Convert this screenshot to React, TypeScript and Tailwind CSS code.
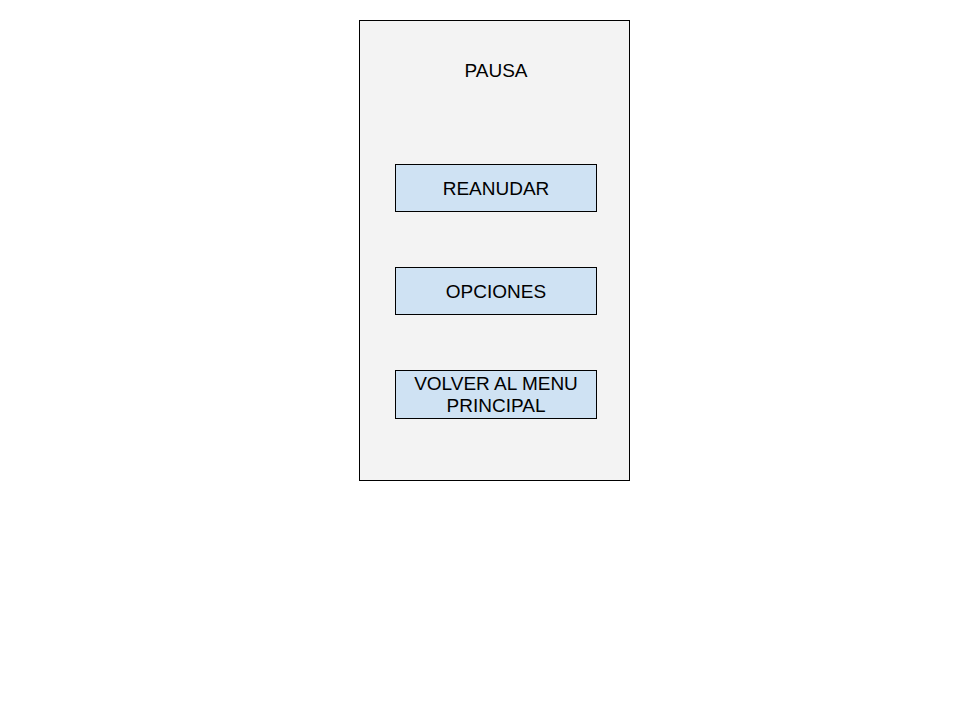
import React from "react";

const options: string[] = ["REANUDAR", "OPCIONES", "VOLVER AL MENU PRINCIPAL"];

export default function App() {
  return (
    <main className="flex min-h-screen items-start justify-center bg-white py-5 pr-4 pl-[45px] font-['Liberation_Sans',Arial,sans-serif] text-black">
      <section
        aria-labelledby="pause-title"
        className="flex w-full max-w-[271px] flex-col items-center border border-black bg-[#f3f3f3] pt-[39px] pr-8 pb-[61px] pl-[35px]"
      >
        <h1 id="pause-title" className="text-[19px] leading-[22px]">
          PAUSA
        </h1>
        <div className="mt-[82px] flex w-full flex-col gap-[55px]">
          {options.map((label) => (
            <button
              key={label}
              type="button"
              className="flex min-h-12 w-full items-center justify-center border border-black bg-[#cfe2f3] px-4 pt-0.5 pb-px text-center text-[19px] leading-[22px]"
            >
              {label}
            </button>
          ))}
        </div>
      </section>
    </main>
  );
}
